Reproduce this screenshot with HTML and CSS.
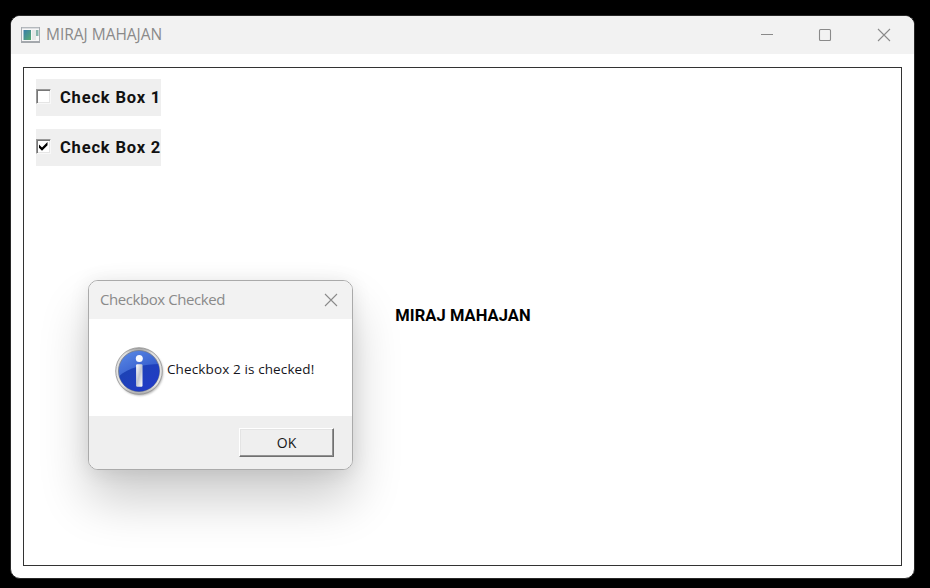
FILE: index.html
```html
<!DOCTYPE html>
<html lang="en">
<head>
<meta charset="utf-8">
<title>MIRAJ MAHAJAN</title>
<link rel="stylesheet" href="styles.css">
</head>
<body>
<main class="window">
  <header class="titlebar">
    <svg class="app-icon" width="20" height="16" viewBox="0 0 20 16">
      <defs>
        <linearGradient id="app" x1="0" y1="0" x2="1" y2="1"><stop offset="0" stop-color="#397eaa"/><stop offset="1" stop-color="#58ad72"/></linearGradient>
      </defs>
      <rect x=".5" y=".5" width="18" height="14" fill="#f7f7f7" stroke="#a9adb2"/>
      <path d="M1 1h17" stroke="#bfc4c9"/>
      <path d="M0 15.3h19" stroke="#8f9499"/>
      <rect x="2.5" y="3" width="7.5" height="10" fill="url(#app)"/>
      <rect x="11" y="3" width="4" height="10" fill="#e6e8e8"/>
      <rect x="15" y="3" width="2.5" height="6" fill="#86b5ad"/>
    </svg>
    <h1 class="title">MIRAJ MAHAJAN</h1>
    <div class="controls">
      <svg width="14" height="14" viewBox="0 0 14 14"><path d="M1 6.5h12"/></svg>
      <svg width="14" height="14" viewBox="0 0 14 14"><rect x="1.5" y="1.5" width="11" height="11" rx="1"/></svg>
      <svg width="14" height="14" viewBox="0 0 14 14"><path d="M1 1l12 12M13 1L1 13"/></svg>
    </div>
  </header>
  <section class="client">
    <div class="check"><span class="box"></span><span class="check-label label-one">Check Box 1</span></div>
    <div class="check"><span class="box"><svg width="11" height="11" viewBox="0 0 11 11"><path d="M1 3.6l3 3 5.5-5.5v3.2L4 9.8l-3-3z"/></svg></span><span class="check-label">Check Box 2</span></div>
    <p class="name">MIRAJ MAHAJAN</p>
  </section>
</main>
<section class="dialog">
  <header class="dialog-title">
    <h2 class="title">Checkbox Checked</h2>
    <svg width="14" height="14" viewBox="0 0 14 14"><path d="M1 1l12 12M13 1L1 13"/></svg>
  </header>
  <div class="dialog-body">
    <svg class="info" width="50" height="51" viewBox="0 0 50 51">
      <defs>
        <linearGradient id="rim" x1="0" y1="0" x2="0" y2="1"><stop offset="0" stop-color="#9c9c9c"/><stop offset=".12" stop-color="#dedede"/><stop offset=".8" stop-color="#e4e4e4"/><stop offset="1" stop-color="#aaa"/></linearGradient>
        <linearGradient id="blue" x1="0" y1="0" x2=".5" y2="1"><stop offset="0" stop-color="#5d8ce6"/><stop offset="1" stop-color="#2246c2"/></linearGradient>
        <linearGradient id="deep" x1="0" y1="0" x2="1" y2="1"><stop offset="0" stop-color="#1b45af"/><stop offset="1" stop-color="#2338cd"/></linearGradient>
        <linearGradient id="stem" x1="0" y1="0" x2="1" y2="1"><stop offset="0" stop-color="#fff"/><stop offset=".5" stop-color="#c2c6d0"/><stop offset="1" stop-color="#fff"/></linearGradient>
        <filter id="soft" x="-20%" y="-20%" width="140%" height="140%"><feGaussianBlur stdDeviation="1"/></filter>
        <clipPath id="disc"><circle cx="24" cy="24" r="20.4"/></clipPath>
      </defs>
      <circle cx="25" cy="25.5" r="23" fill="#777" opacity=".6" filter="url(#soft)"/>
      <circle cx="24" cy="24" r="23.3" fill="url(#rim)" stroke="#929292" stroke-width=".8"/>
      <circle cx="24" cy="24" r="20.5" fill="url(#blue)" stroke="#747a87" stroke-width=".8"/>
      <path clip-path="url(#disc)" d="M2 31C13 20 30 17 46 17v32H2z" fill="url(#deep)"/>
      <circle cx="24.3" cy="11.5" r="3.5" fill="#f7f9ff"/>
      <rect x="21.1" y="17.3" width="6.4" height="22.4" rx="1.2" fill="url(#stem)"/>
    </svg>
    <p class="message">Checkbox 2 is checked!</p>
  </div>
  <footer class="dialog-footer"><button class="ok">OK</button></footer>
</section>
</body>
</html>
```
FILE: styles.css
```css
* { box-sizing: border-box; }

body {
  margin: 0;
  height: 588px;
  overflow: hidden;
  padding: 15px 0 0 10px;
  background: #000;
  font-family: "Noto Sans", "Open Sans", sans-serif;
}

h1, h2, p { margin: 0; }

.window {
  width: 905px;
  height: 564px;
  display: flex;
  flex-direction: column;
  border: 1px solid #282828;
  border-radius: 10px;
  background: #fff;
  overflow: hidden;
}

.titlebar {
  flex: none;
  height: 38px;
  display: flex;
  align-items: center;
  padding: 0 23px 0 10px;
  background: #f2f2f2;
}

.app-icon { margin-top: -1px; }

.title {
  margin-top: -2px;
  font-family: "Open Sans", sans-serif;
  font-size: 15px;
  font-weight: 400;
  line-height: 20px;
  color: #8a8a8a;
  white-space: nowrap;
}

.titlebar .title { margin-left: 5px; font-size: 15.5px; letter-spacing: -0.02px; }

.dialog-title .title { letter-spacing: -0.43px; }

.controls {
  margin-left: auto;
  display: flex;
  gap: 44px;
}

.controls svg:last-child { margin-left: 1px; }

.controls svg, .dialog-title svg {
  fill: none;
  stroke: #8a8a8a;
  stroke-width: 1.1;
}

.client {
  flex: 1;
  margin: 13px 12px 12px;
  padding: 11px 11px 11px 12px;
  border: 1px solid #333;
  display: flex;
  flex-direction: column;
  gap: 13px;
}

.check {
  width: 125px;
  height: 37px;
  display: flex;
  align-items: center;
  gap: 9px;
  background: #efefef;
}

.box {
  flex: none;
  width: 15px;
  height: 15px;
  margin-top: -2px;
  border: 1px solid;
  border-color: #999 #f8f8f8 #f8f8f8 #999;
  box-shadow: inset 1px 1px #777, inset -1px -1px #e5e5e5;
  background: #fff;
  display: grid;
  place-items: center;
}

.box svg { fill: #000; }

.check-label {
  font: 700 16.5px/20px Roboto, sans-serif;
  letter-spacing: 0.82px;
  white-space: nowrap;
  color: #111;
}

.name {
  align-self: center;
  margin-top: 127px;
  font: 700 16.5px/20px Roboto, sans-serif;
  letter-spacing: 0.07px;
  color: #000;
  white-space: nowrap;
}

.dialog {
  position: absolute;
  left: 88px;
  top: 280px;
  width: 265px;
  height: 190px;
  display: flex;
  flex-direction: column;
  border: 1px solid #aaa;
  border-radius: 10px;
  overflow: hidden;
  background: #fff;
  box-shadow: 0 30px 50px rgba(0, 0, 0, .2), 0 2px 20px rgba(0, 0, 0, .09);
}

.dialog-title {
  height: 38px;
  display: flex;
  align-items: center;
  justify-content: space-between;
  padding: 0 14px 0 11px;
  background: #f2f2f2;
}

.dialog-body {
  height: 97px;
  display: flex;
  align-items: flex-start;
  padding: 28px 0 0 26px;
}

.message {
  margin: 12px 0 0 2px;
  font: 400 13.5px/20px "Open Sans", sans-serif;
  letter-spacing: 0.12px;
  color: #151520;
  white-space: nowrap;
}

.dialog-footer {
  flex: 1;
  display: flex;
  justify-content: flex-end;
  align-items: flex-start;
  padding: 12px 18px 0 0;
  background: #efefef;
}

.ok {
  width: 95px;
  height: 29px;
  padding: 0;
  border: 1px solid;
  border-color: #fff #707070 #707070 #fff;
  box-shadow: inset -1px -1px #929292, inset 1px 1px #e4e4e4;
  background: #efefef;
  color: #181818;
  font: 400 14px/20px "Open Sans", sans-serif;
}
```
